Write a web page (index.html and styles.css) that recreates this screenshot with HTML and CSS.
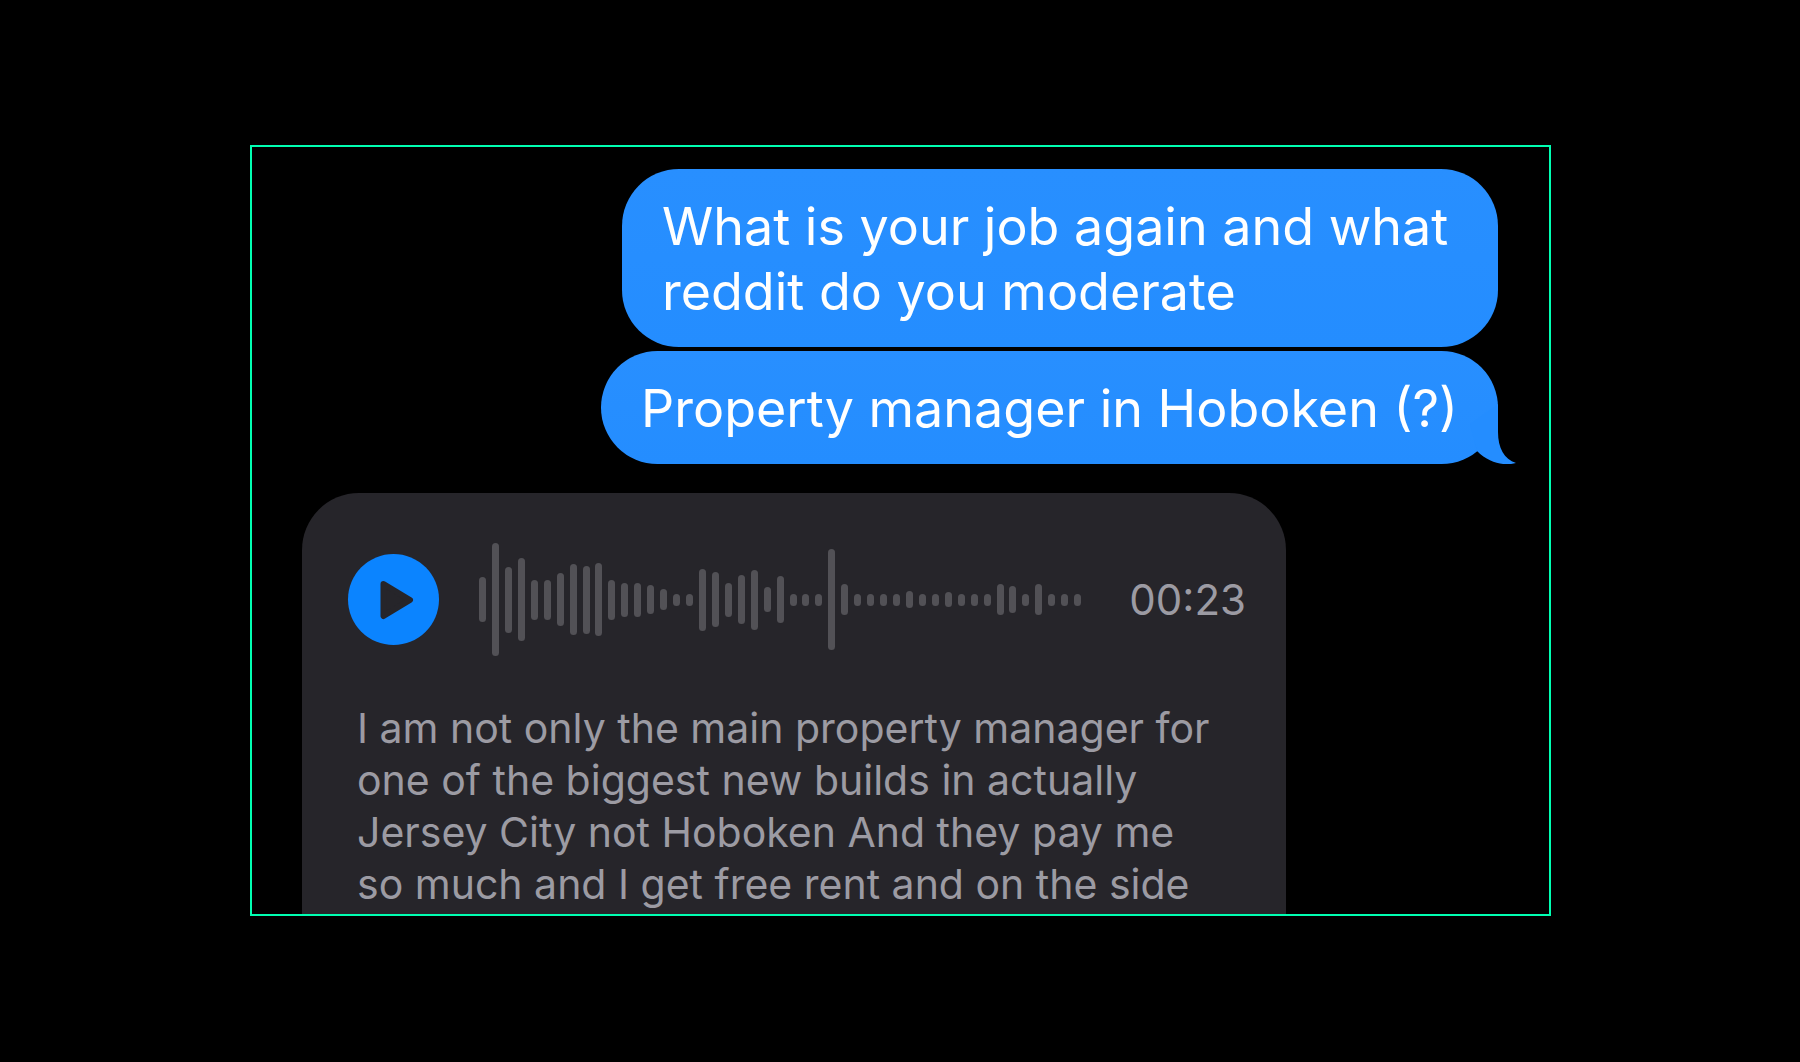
FILE: index.html
```html
<!DOCTYPE html>
<html lang="en">
<head>
    <meta charset="UTF-8">
    <meta name="viewport" content="width=device-width, initial-scale=1.0">
    <title>Messages</title>
    <link rel="stylesheet" href="styles.css">
</head>
<body>
    <main class="chat">
        <div class="message sent wrapped">What is your job again and what reddit do you moderate</div>
        <div class="message sent last">
            Property manager in Hoboken (?)
            <svg class="tail" viewBox="0 0 46 60" aria-hidden="true">
                <path d="M28 0V28C28 44 34 55 46 59C36 62 20 60 7 47L0 20Z"/>
            </svg>
        </div>

        <div class="audio-message">
            <div class="player">
                <button type="button" class="play-button" aria-label="Play audio message">
                    <svg viewBox="0 0 91 91" aria-hidden="true">
                        <path d="M35.5 30L62 46L35.5 62Z"/>
                    </svg>
                </button>
                <div id="waveform" class="waveform"></div>
                <span class="duration">00:23</span>
            </div>
            <p class="transcript">I am not only the main property manager for<br>one of the biggest new builds in actually<br>Jersey City not Hoboken And they pay me<br>so much and I get free rent and on the side</p>
        </div>
    </main>

    <script>
        const waveform = document.getElementById('waveform');

        const levels = [
            45, 113, 66, 83, 40, 40, 53, 71, 68, 73, 40, 34,
            34, 29, 21, 12, 12, 62, 55, 34, 49, 60, 25, 47,
            12, 12, 12, 101, 31, 12, 12, 12, 12, 17, 12, 12,
            15, 12, 12, 12, 31, 27, 12, 31, 12, 12, 12
        ];

        levels.forEach((level) => {
            const bar = document.createElement('span');
            bar.className = 'bar';
            bar.style.height = `${level}px`;
            waveform.appendChild(bar);
        });
    </script>
</body>
</html>
```
FILE: styles.css
```css
* {
    box-sizing: border-box;
}

body {
    margin: 0;
    padding: 145px 249px 146px 250px;
    height: 100vh;
    display: flex;
    background-color: #000;
    font-family: Inter, 'Liberation Sans', sans-serif;
}

.chat {
    flex: 1;
    display: flex;
    flex-direction: column;
    align-items: flex-end;
    padding: 22px 51px 0 50px;
    border: 2px solid #00ffb2;
    overflow: hidden;
}

.message {
    padding: 25px 40px 23px;
    border-radius: 57px;
    font-size: 52px;
    line-height: 65px;
}

.sent {
    background: linear-gradient(#288fff, #248dff);
    color: #fff;
}

.wrapped {
    max-width: 876px;
}

.last {
    position: relative;
    margin-top: 4px;
}

.tail {
    position: absolute;
    right: -18px;
    bottom: 0;
    width: 46px;
    height: 60px;
    fill: #248dff;
}

.audio-message {
    align-self: flex-start;
    flex-shrink: 0;
    width: 984px;
    max-width: 100%;
    margin-top: 29px;
    padding: 50px 40px 80px 46px;
    border-radius: 57px;
    background-color: #26252a;
    color: #9c9ba3;
    font-size: 41px;
    line-height: 52px;
}

.player {
    display: flex;
    align-items: center;
    height: 113px;
}

.play-button {
    flex: none;
    width: 91px;
    height: 91px;
    padding: 0;
    border: none;
    border-radius: 50%;
    background-color: #0b84ff;
    cursor: pointer;
}

.play-button svg {
    display: block;
    fill: #26252a;
    stroke: #26252a;
    stroke-width: 6;
    stroke-linejoin: round;
}

.waveform {
    flex: 1;
    display: flex;
    align-items: center;
    justify-content: space-between;
    margin: 0 48px 0 40px;
}

.bar {
    width: 7px;
    border-radius: 4px;
    background-color: #525156;
}

.duration {
    font-size: 42px;
}

.transcript {
    margin: 46px 0 0;
    padding-left: 9px;
    white-space: nowrap;
}
```
